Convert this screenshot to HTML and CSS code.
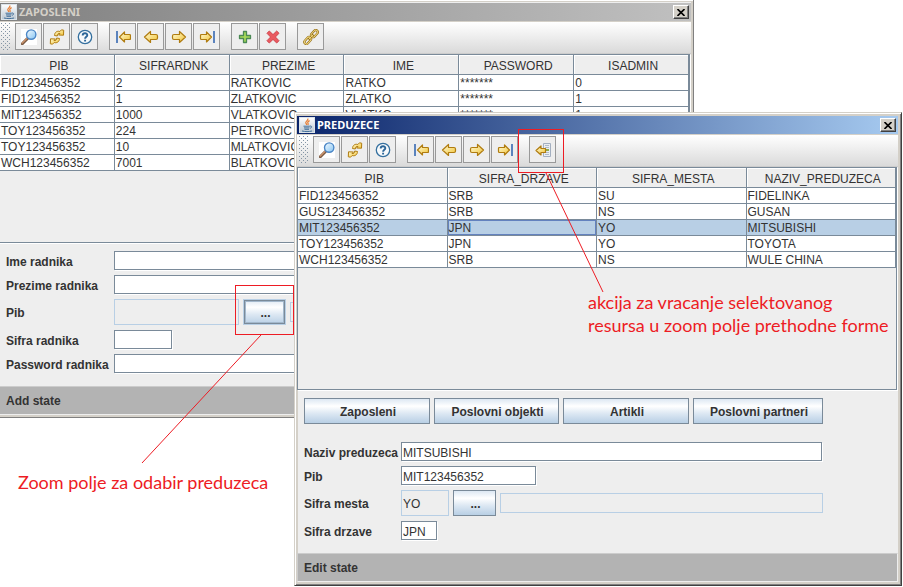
FILE: index.html
```html
<!DOCTYPE html>
<html lang="sr-Latn">
<head>
<meta charset="utf-8">
<title>Zaposleni</title>
<link rel="stylesheet" href="styles.css">
</head>
<body>
<svg class="defs" aria-hidden="true">
  <defs>
    <linearGradient id="gold" x1="0" y1="0" x2="1" y2="1">
      <stop offset="0" stop-color="#fffbd8"/><stop offset="1" stop-color="#f2c436"/>
    </linearGradient>
    <linearGradient id="lens" x1="0" y1="0" x2="1" y2="1">
      <stop offset="0" stop-color="#f4fbff"/><stop offset="1" stop-color="#86c4f2"/>
    </linearGradient>
    <linearGradient id="tile" x1="0" y1="0" x2="0" y2="1">
      <stop offset="0" stop-color="#ffffff"/><stop offset="1" stop-color="#b9c6d2"/>
    </linearGradient>
  </defs>
  <symbol id="java" viewBox="0 0 16 16">
    <rect x=".5" y=".5" width="15" height="15" fill="url(#tile)" stroke="#dce4ea"/>
    <path d="M8.8 1.5c1 2-2.6 2.6-2 4.4.2.8.9 1.2 1 2M10.6 3.6C8.700 4.600 8.400 5.500 9 6.300c.4.6.2 1.100-.2 1.500" fill="none" stroke="#e8792b" stroke-width="1.200"/>
    <path d="M4.500 9.200h6.400M5 10.900h5.500M5.500 12.300h4.500M3 14c3 .8 7 .8 10 0M11 9c2.200-.3 2.200 1.800 0 2.300" fill="none" stroke="#44709a"/>
  </symbol>
  <symbol id="search" viewBox="0 0 16 16">
    <path fill="#fff" d="M0 0h16v16H0z"/>
    <path d="M6.500 9.500 1.300 14.700" stroke="#7b5b45" stroke-width="3" stroke-linecap="round"/>
    <path d="M6 9.400 1.200 14.200" stroke="#d69a70" stroke-width="1.200" stroke-linecap="round"/>
    <circle cx="10.200" cy="5.600" r="4.700" fill="url(#lens)" stroke="#4b86c6" stroke-width="1.400"/>
  </symbol>
  <symbol id="refresh" viewBox="0 0 16 16">
    <g fill="url(#gold)" stroke="#b07c10" stroke-linejoin="round">
      <path d="M5.500 6.500C5.500 3.500 8 1.500 10.800 2.500L12.500.8l2.200.4-.2 5-5-.2 1.500-1.500C9.500 4 8.200 5 8.300 7z"/>
      <path d="M10.500 9.500c0 3-2.500 5-5.300 4l-1.700 1.700-2.200-.4.2-5 5 .2L5 11.500c1.500.5 2.800-.5 2.700-2.500z"/>
    </g>
  </symbol>
  <symbol id="help" viewBox="0 0 16 16">
    <circle cx="8" cy="8" r="6.700" fill="#f7fafc" stroke="#35709f" stroke-width="1.300"/>
    <path d="M5.700 6.400C5.700 3.400 10.400 3.600 10.300 6.200 10.200 7.800 8.100 7.700 8.100 9.700M8.100 10.800v1.800" fill="none" stroke="#2c6699" stroke-width="1.900"/>
  </symbol>
  <symbol id="left" viewBox="0 0 16 16">
    <path d="M1.500 8 7.500 2.500v3H13q1.500 0 1.500 1.500v2q0 1.500-1.500 1.500H7.500v3z" fill="url(#gold)" stroke="#b07c10" stroke-width="1.200" stroke-linejoin="round"/>
  </symbol>
  <symbol id="right" viewBox="0 0 16 16">
    <path d="M14.500 8 8.500 2.500v3H3Q1.500 5.500 1.500 7v2q0 1.500 1.500 1.500h5.500v3z" fill="url(#gold)" stroke="#b07c10" stroke-width="1.200" stroke-linejoin="round"/>
  </symbol>
  <symbol id="first" viewBox="0 0 16 16">
    <path d="M1 2h2v12H1z" fill="#5b83bd"/>
    <path d="M4.500 8 9.500 3v2.500h5q1 0 1 1v3q0 1-1 1h-5V13z" fill="url(#gold)" stroke="#b07c10" stroke-width="1.200" stroke-linejoin="round"/>
  </symbol>
  <symbol id="last" viewBox="0 0 16 16">
    <path d="M14 2h2v12h-2z" fill="#5b83bd"/>
    <path d="M12.500 8 7.500 3v2.500h-5q-1 0-1 1v3q0 1 1 1h5V13z" fill="url(#gold)" stroke="#b07c10" stroke-width="1.200" stroke-linejoin="round"/>
  </symbol>
  <symbol id="add" viewBox="0 0 16 16">
    <path d="M6.500 2.500h3v4h4v3h-4v4h-3v-4h-4v-3h4z" fill="#a5d858" stroke="#4b8a55" stroke-width="1.300" stroke-linejoin="round"/>
  </symbol>
  <symbol id="delete" viewBox="0 0 16 16">
    <path d="M4.300 2 8 5.600 11.700 2 14 4.300 10.400 8 14 11.700 11.700 14 8 10.400 4.300 14 2 11.700 5.600 8 2 4.300z" fill="#ea5a60" stroke="#d0464e" stroke-linejoin="round"/>
  </symbol>
  <symbol id="chain" viewBox="0 0 16 16">
    <g fill="none" stroke="#8e6710" stroke-width="2.200">
      <rect x="-4" y="-2" width="8" height="4" rx="2" transform="translate(11.400 4.600) rotate(-48)"/>
      <rect x="-4" y="-2" width="8" height="4" rx="2" transform="translate(4.700 11.500) rotate(-48)"/>
      <path d="M5.500 10.500 10.500 5.500"/>
    </g>
    <g fill="none" stroke="#f0d880">
      <rect x="-4" y="-2" width="8" height="4" rx="2" transform="translate(11.400 4.600) rotate(-48)"/>
      <rect x="-4" y="-2" width="8" height="4" rx="2" transform="translate(4.700 11.500) rotate(-48)"/>
      <path d="M5.500 10.500 10.500 5.500"/>
    </g>
  </symbol>
  <symbol id="pickup" viewBox="0 0 16 16">
    <path d="M8.500 1.500h7v13h-7z" fill="#e9edf1" stroke="#a3afc0"/>
    <path d="M10 3.500h4M10 5.500h4M10 10.500h4M10 12.500h4" stroke="#b0bac8"/>
    <path d="M10 7h4v2h-4z" fill="#8dab4c"/>
    <path d="M1 8.500 6 4v2.500h4.500v4H6V13z" fill="url(#gold)" stroke="#b07c10" stroke-width="1.200" stroke-linejoin="round"/>
  </symbol>
  <symbol id="close" viewBox="0 0 8 7">
    <path d="M.5 0 7.500 7M7.500 0 .5 7" fill="none" stroke="#000" stroke-width="1.600"/>
  </symbol>
</svg>

<main class="desktop">
  <section class="window window-employees" aria-label="Zaposleni">
    <header class="titlebar inactive">
      <svg class="icon"><use href="#java"/></svg>
      <h1>ZAPOSLENI</h1>
      <button class="close" type="button" aria-label="Zatvori"><svg><use href="#close"/></svg></button>
    </header>
    <div class="toolbar">
      <span class="grip"></span>
      <div class="tools">
        <button type="button" aria-label="Search"><svg class="icon"><use href="#search"/></svg></button>
        <button type="button" aria-label="Refresh"><svg class="icon"><use href="#refresh"/></svg></button>
        <button type="button" aria-label="Help"><svg class="icon"><use href="#help"/></svg></button>
      </div>
      <div class="tools">
        <button type="button" aria-label="First"><svg class="icon"><use href="#first"/></svg></button>
        <button type="button" aria-label="Previous"><svg class="icon"><use href="#left"/></svg></button>
        <button type="button" aria-label="Next"><svg class="icon"><use href="#right"/></svg></button>
        <button type="button" aria-label="Last"><svg class="icon"><use href="#last"/></svg></button>
      </div>
      <div class="tools">
        <button type="button" aria-label="Add"><svg class="icon"><use href="#add"/></svg></button>
        <button type="button" aria-label="Delete"><svg class="icon"><use href="#delete"/></svg></button>
      </div>
      <div class="tools">
        <button type="button" aria-label="Next form"><svg class="icon"><use href="#chain"/></svg></button>
      </div>
    </div>
    <div class="scrollpane employees-list">
      <table>
        <thead><tr><th>PIB</th><th>SIFRARDNK</th><th>PREZIME</th><th>IME</th><th>PASSWORD</th><th>ISADMIN</th></tr></thead>
        <tbody>
          <tr><td>FID123456352</td><td>2</td><td>RATKOVIC</td><td>RATKO</td><td>*******</td><td>0</td></tr>
          <tr><td>FID123456352</td><td>1</td><td>ZLATKOVIC</td><td>ZLATKO</td><td>*******</td><td>1</td></tr>
          <tr><td>MIT123456352</td><td>1000</td><td>VLATKOVIC</td><td>VLATKO</td><td>*******</td><td>1</td></tr>
          <tr><td>TOY123456352</td><td>224</td><td>PETROVIC</td><td></td><td></td><td></td></tr>
          <tr><td>TOY123456352</td><td>10</td><td>MLATKOVIC</td><td></td><td></td><td></td></tr>
          <tr><td>WCH123456352</td><td>7001</td><td>BLATKOVIC</td><td></td><td></td><td></td></tr>
        </tbody>
      </table>
    </div>
    <form class="form employees-form">
      <label for="ime">Ime radnika</label>
      <div class="field"><input id="ime" type="text" class="long"></div>
      <label for="prezime">Prezime radnika</label>
      <div class="field"><input id="prezime" type="text" class="long"></div>
      <label for="pib-radnika">Pib</label>
      <div class="field">
        <input id="pib-radnika" type="text" class="locked tall code" readonly>
        <button type="button" class="push zoom focused">...</button>
        <input type="text" class="locked" aria-label="Naziv" readonly>
      </div>
      <label for="sifra-radnika">Sifra radnika</label>
      <div class="field"><input id="sifra-radnika" type="text" class="short"></div>
      <label for="lozinka">Password radnika</label>
      <div class="field"><input id="lozinka" type="password" class="long"></div>
    </form>
    <footer class="status">Add state</footer>
  </section>

  <section class="window window-companies" aria-label="Preduzece">
    <header class="titlebar active">
      <svg class="icon"><use href="#java"/></svg>
      <h2>PREDUZECE</h2>
      <button class="close" type="button" aria-label="Zatvori"><svg><use href="#close"/></svg></button>
    </header>
    <div class="toolbar">
      <span class="grip"></span>
      <div class="tools">
        <button type="button" aria-label="Search"><svg class="icon"><use href="#search"/></svg></button>
        <button type="button" aria-label="Refresh"><svg class="icon"><use href="#refresh"/></svg></button>
        <button type="button" aria-label="Help"><svg class="icon"><use href="#help"/></svg></button>
      </div>
      <div class="tools">
        <button type="button" aria-label="First"><svg class="icon"><use href="#first"/></svg></button>
        <button type="button" aria-label="Previous"><svg class="icon"><use href="#left"/></svg></button>
        <button type="button" aria-label="Next"><svg class="icon"><use href="#right"/></svg></button>
        <button type="button" aria-label="Last"><svg class="icon"><use href="#last"/></svg></button>
      </div>
      <div class="tools">
        <button type="button" aria-label="Pickup"><svg class="icon"><use href="#pickup"/></svg></button>
      </div>
    </div>
    <div class="scrollpane companies-list">
      <table>
        <thead><tr><th>PIB</th><th>SIFRA_DRZAVE</th><th>SIFRA_MESTA</th><th>NAZIV_PREDUZECA</th></tr></thead>
        <tbody>
          <tr><td>FID123456352</td><td>SRB</td><td>SU</td><td>FIDELINKA</td></tr>
          <tr><td>GUS123456352</td><td>SRB</td><td>NS</td><td>GUSAN</td></tr>
          <tr class="selected"><td>MIT123456352</td><td class="current">JPN</td><td>YO</td><td>MITSUBISHI</td></tr>
          <tr><td>TOY123456352</td><td>JPN</td><td>YO</td><td>TOYOTA</td></tr>
          <tr><td>WCH123456352</td><td>SRB</td><td>NS</td><td>WULE CHINA</td></tr>
        </tbody>
      </table>
    </div>
    <nav class="links">
      <button type="button" class="push">Zaposleni</button>
      <button type="button" class="push">Poslovni objekti</button>
      <button type="button" class="push">Artikli</button>
      <button type="button" class="push">Poslovni partneri</button>
    </nav>
    <form class="form companies-form">
      <label for="naziv">Naziv preduzeca</label>
      <div class="field"><input id="naziv" type="text" class="long" value="MITSUBISHI"></div>
      <label for="pib">Pib</label>
      <div class="field"><input id="pib" type="text" class="medium" value="MIT123456352"></div>
      <label for="mesto">Sifra mesta</label>
      <div class="field">
        <input id="mesto" type="text" class="locked tall place" value="YO" readonly>
        <button type="button" class="push zoom">...</button>
        <input type="text" class="locked name" aria-label="Naziv mesta" readonly>
      </div>
      <label for="drzava">Sifra drzave</label>
      <div class="field"><input id="drzava" type="text" class="tiny" value="JPN"></div>
    </form>
    <footer class="status">Edit state</footer>
  </section>

  <svg class="marks" aria-hidden="true">
    <rect x="235.500" y="285.500" width="58" height="49"/>
    <path d="M261 335 142 463"/>
    <rect x="518.500" y="129.500" width="45" height="43"/>
    <path d="M546 173 603 292"/>
  </svg>
  <p class="note note-zoom">Zoom polje za odabir preduzeca</p>
  <p class="note note-pickup">akcija za vracanje selektovanog<br>resursa u zoom polje prethodne forme</p>
</main>
</body>
</html>
```
FILE: styles.css
```css
* {
  box-sizing: border-box;
}

body {
  margin: 0;
  background: #fff;
  color: #333;
  font: 12px/14px "Liberation Sans", Arial, sans-serif;
}

input,
button {
  margin: 0;
  border-radius: 0;
  color: inherit;
  font: inherit;
}

.defs {
  position: absolute;
  width: 0;
  height: 0;
}

.icon {
  flex: none;
  display: block;
  width: 16px;
  height: 16px;
}

.desktop {
  position: relative;
  min-height: 100vh;
  overflow: hidden;
}

/* Windows */
.window {
  position: absolute;
  border: 1px solid #d4d0c8;
  background: #eee;
}

.window-employees {
  top: -1px;
  left: -4px;
  right: 209px;
  padding: 3px 2px 2px;
  border-right-color: #808080;
  border-bottom-color: #808080;
  box-shadow: inset 1px 1px #fff, inset 0 0 0 2px #d4d0c8;
}

.window-companies {
  top: 112px;
  left: 294px;
  right: 1px;
  padding: 3px 3px 3px 2px;
  border-right-color: #404040;
  border-bottom-color: #404040;
  box-shadow: inset 1px 1px #fff, inset -1px -1px #808080, inset 0 0 0 3px #d4d0c8;
}

.titlebar {
  display: flex;
  align-items: center;
  gap: 2px;
  height: 19px;
  padding: 0 2px;
  border-bottom: 1px solid #d4d0c8;
}

.titlebar.inactive {
  background: linear-gradient(90deg, #808080, #c0c0c0);
  color: #d4d0c8;
}

.titlebar.active {
  background: linear-gradient(90deg, #0a246a, #a6caf0);
  color: #fff;
}

.titlebar h1,
.titlebar h2 {
  flex: 1;
  margin: 0;
  font: bold 11px/16px "Noto Sans", sans-serif;
}

.close {
  display: flex;
  align-items: center;
  justify-content: center;
  width: 16px;
  height: 14px;
  padding: 0;
  border: 1px solid;
  border-color: #fff #404040 #404040 #fff;
  background: #d4d0c8;
  box-shadow: inset -1px -1px #808080;
}

.close svg {
  width: 8px;
  height: 7px;
}

/* Toolbar */
.toolbar {
  display: flex;
  align-items: flex-start;
  gap: 11px;
  height: 32px;
  padding: 1px 2px;
  border-bottom: 1px solid #ccc;
  background: linear-gradient(#fff, #dadada);
}

.grip {
  width: 10px;
  height: 28px;
  margin-right: -7px;
  background:
    conic-gradient(at 1px 1px, transparent 75%, #8494a4 0) 0 0 / 4px 4px,
    conic-gradient(at 1px 1px, transparent 75%, #8494a4 0) 2px 2px / 4px 4px;
}

.tools {
  display: flex;
  gap: 1px;
}

.tools button {
  display: flex;
  align-items: center;
  justify-content: center;
  width: 27px;
  height: 27px;
  padding: 0;
  border: 1px solid #999;
  background: #eee;
}

/* Tables */
.scrollpane {
  margin-right: 1px;
  border: 1px solid #7a8a99;
  box-shadow: 1px 1px #fff;
}

.employees-list {
  height: 189px;
}

.companies-list {
  height: 223px;
}

table {
  width: 100%;
  border-spacing: 0;
  table-layout: fixed;
}

th,
td {
  height: 16px;
  padding: 1px 1px 0;
  border: solid #7a8a99;
  border-width: 0 1px 1px 0;
  overflow: hidden;
  white-space: nowrap;
}

th {
  height: 20px;
  padding: 2px 0 0 4px;
  background: #eee;
  box-shadow: inset 1px 1px #fff;
  font-weight: normal;
}

td {
  background: #fff;
}

.selected td {
  background: #b8cfe5;
}

.selected .current {
  box-shadow: inset 0 0 0 1px #6382bf;
}

/* Forms */
.form {
  display: grid;
  align-items: center;
  row-gap: 5px;
  font-weight: bold;
}

.form label {
  padding-top: 2px;
}

.employees-form {
  grid-template-columns: 108px 1fr;
  padding: 8px 7px 13px;
}

.companies-form {
  grid-template-columns: 97px 1fr;
  padding: 18px 7px 13px;
}

.field {
  display: flex;
  align-items: center;
  gap: 4px;
}

.field input {
  height: 19px;
  padding: 2px 1px 0;
  border: 1px solid #7a8a99;
  background: #fff;
  box-shadow: 1px 1px #fff;
  font-weight: normal;
  outline: none;
}

.field .locked {
  height: 20px;
  border-color: #b8cfe5;
  background: #eee;
  box-shadow: none;
}

.field .tall {
  height: 26px;
}

.long {
  width: 421px;
}

.medium {
  width: 135px;
}

.short {
  width: 58px;
}

.tiny {
  width: 36px;
}

.code {
  width: 125px;
}

.place {
  width: 48px;
}

.name {
  width: 323px;
}

.push {
  height: 26px;
  padding: 2px 0 0 2px;
  border: 1px solid #7a8a99;
  background: linear-gradient(#dde8f3, #fff 30%, #dde8f3 60%, #b8cfe5);
  font-weight: bold;
}

.zoom {
  width: 43px;
}

.focused {
  border-color: #b8cfe5;
  box-shadow: inset 0 0 0 1px #7a8a99, inset 0 0 0 2px #a3b8cc;
}

.links {
  display: grid;
  grid-template-columns: 126px 125px 126px 130px;
  gap: 4px;
  padding: 8px 7px 0;
}

.status {
  height: 29px;
  padding: 7px 6px;
  border: 1px solid;
  border-color: #ccc #eee #eee #ccc;
  background: #b3b3b3;
  font-weight: bold;
}

/* Annotations */
.marks {
  position: absolute;
  inset: 0;
  width: 100%;
  height: 100%;
  fill: none;
  stroke: #ed1c24;
  pointer-events: none;
}

.note {
  position: absolute;
  margin: 0;
  color: #ed1c24;
  font: 18px/23px Lato, sans-serif;
  white-space: nowrap;
}

.note-zoom {
  top: 471px;
  left: 18px;
}

.note-pickup {
  top: 291px;
  left: 588px;
}
```
